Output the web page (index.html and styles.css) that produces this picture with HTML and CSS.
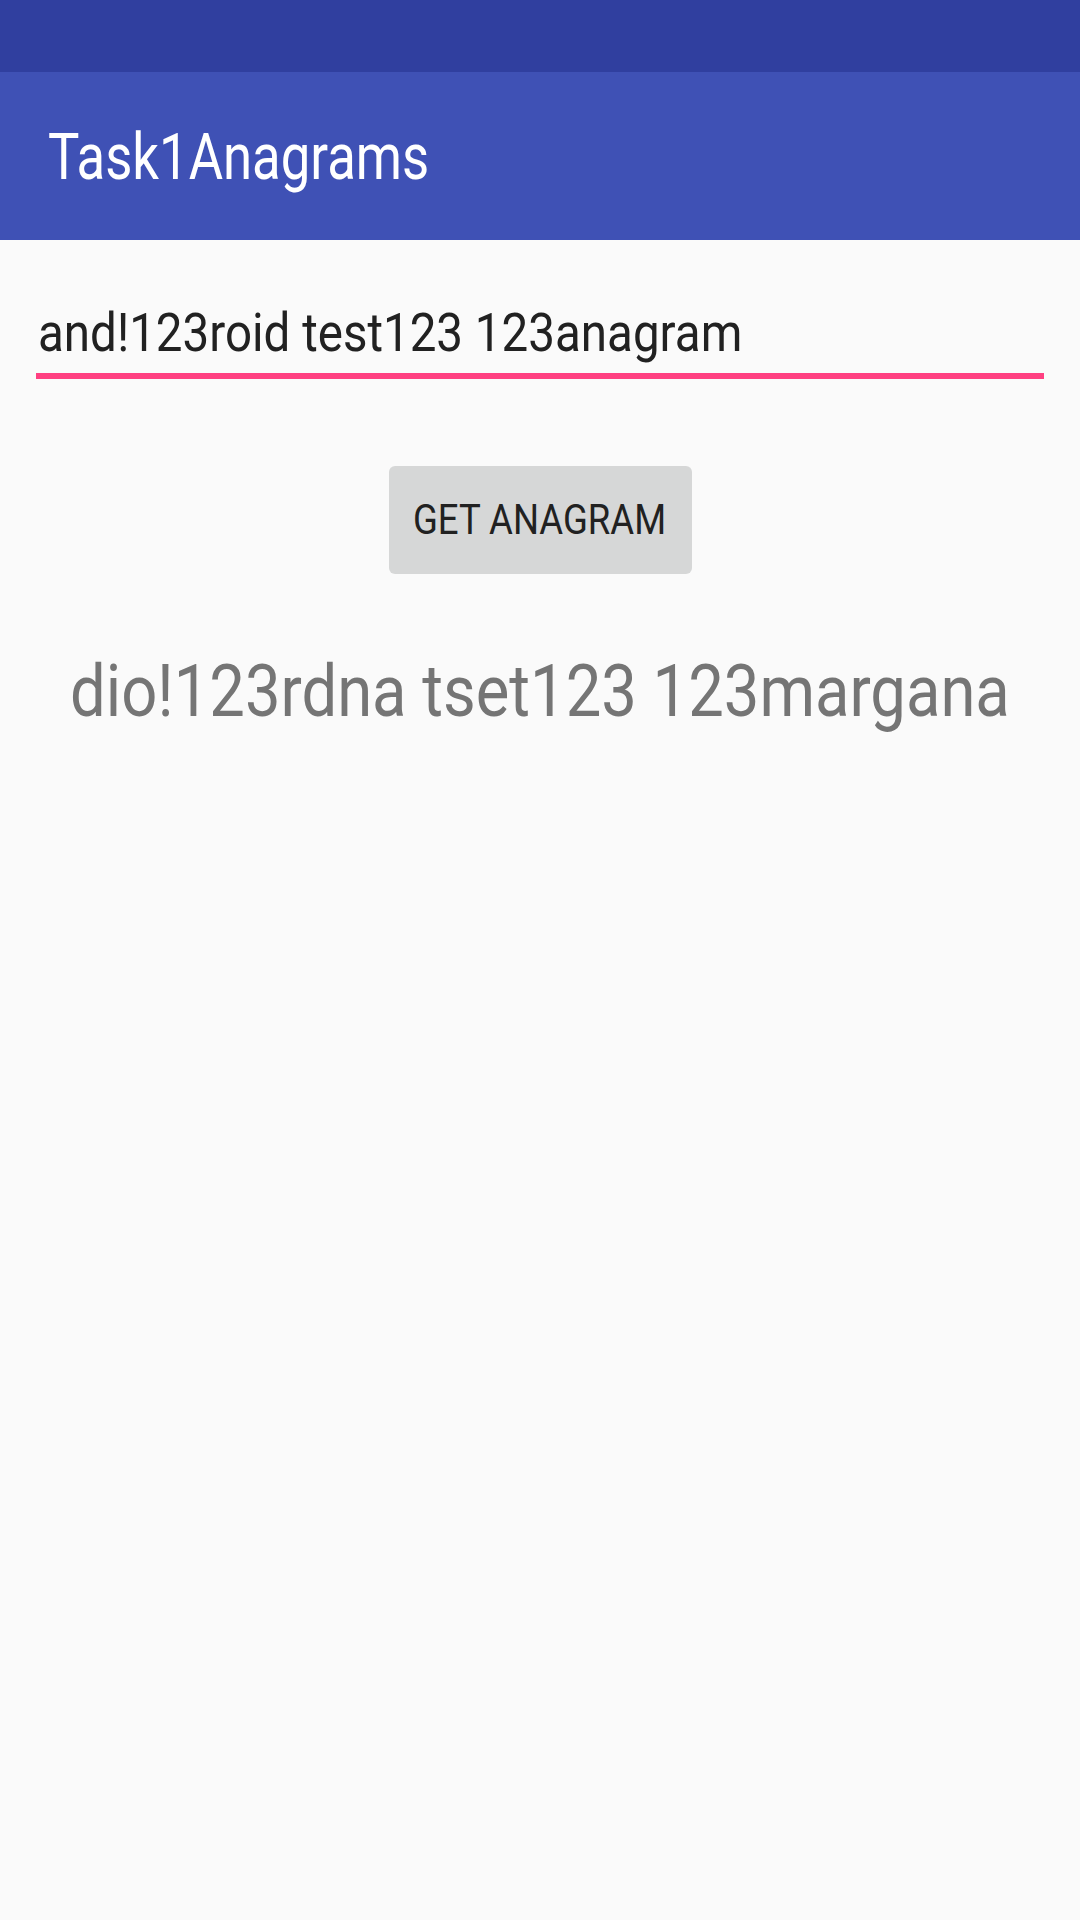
FILE: index.html
```html
<!DOCTYPE html>
<html lang="en">
<head>
<meta charset="utf-8">
<title>Task1Anagrams</title>
<link rel="stylesheet" href="styles.css">
</head>
<body>
<div class="status"></div>
<header class="appbar"><span class="title">Task1Anagrams</span></header>
<main class="content">
  <div class="field">
    <div class="field-text"><span class="cond">and!123roid test123 123anagram</span></div>
    <div class="field-line"></div>
  </div>
  <div class="actions">
    <button class="btn"><span class="btn-label">GET ANAGRAM</span></button>
  </div>
  <div class="result"><span class="result-text">dio!123rdna tset123 123margana</span></div>
</main>
</body>
</html>
```
FILE: styles.css
```css
html, body {
  margin: 0;
  padding: 0;
}
body {
  background: #fafafa;
  font-family: Roboto, "Noto Sans", sans-serif;
  width: 1080px;
  min-height: 1920px;
}
.status {
  height: 72px;
  background: #303f9f;
}
.appbar {
  height: 168px;
  box-sizing: border-box;
  background: #3f51b5;
  padding: 54px 0 0 48px;
}
.title {
  display: inline-block;
  white-space: nowrap;
  color: #ffffff;
  font-size: 64px;
  line-height: 64px;
  transform: scaleX(0.823);
  transform-origin: left center;
}
.cond {
  display: inline-block;
  white-space: nowrap;
  transform: scaleX(0.88);
  transform-origin: left center;
}
.btn-label {
  display: inline-block;
  white-space: nowrap;
  transform: scaleX(0.87);
  transform-origin: center center;
}
.result-text {
  display: inline-block;
  white-space: nowrap;
  transform: scaleX(0.88);
  transform-origin: center center;
}
.content {
  display: flex;
  flex-direction: column;
}
.field {
  margin: 66px 36px 0 36px;
}
.field-text {
  font-size: 54px;
  line-height: 54px;
  color: #212121;
  padding-left: 2px;
}
.field-line {
  margin-top: 13px;
  height: 6px;
  background: #ff4081;
}
.actions {
  display: flex;
  justify-content: center;
  margin-top: 87px;
}
.btn {
  width: 303px;
  height: 108px;
  border: none;
  border-radius: 6px;
  background: #d6d7d7;
  color: #212121;
  font-family: Roboto, sans-serif;
  font-size: 42px;
  line-height: 42px;
  padding: 0;
  display: flex;
  align-items: center;
  justify-content: center;
}
.result {
  margin-top: 82px;
  text-align: center;
  font-size: 72px;
  line-height: 72px;
  color: #757575;
  white-space: nowrap;
}
```
